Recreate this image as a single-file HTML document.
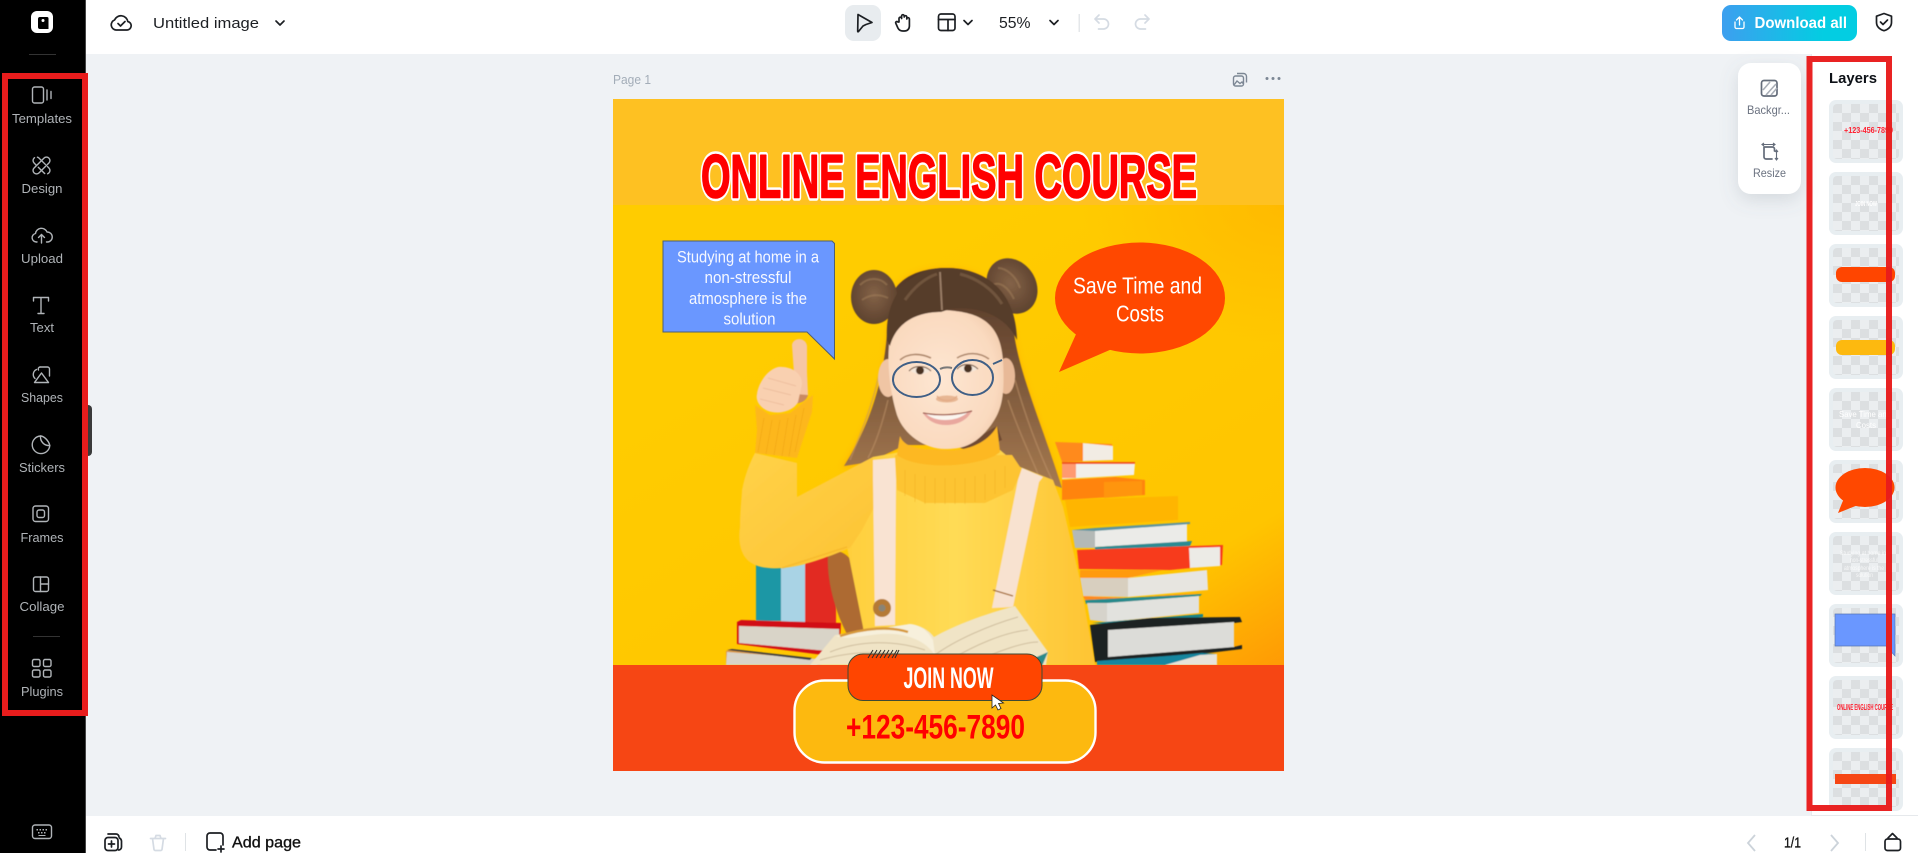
<!DOCTYPE html>
<html lang="en"><head><meta charset="utf-8"><title>Untitled image</title>
<style>
html,body{margin:0;padding:0;width:1918px;height:853px;overflow:hidden;background:#eff2f5}
svg{display:block;position:absolute;left:0;top:0}
text{font-family:"Liberation Sans",sans-serif}
.n{font-family:"Liberation Sans Narrow","Liberation Sans",sans-serif}
.ic{fill:none;stroke:#b0b4b8;stroke-width:1.4;stroke-linecap:round;stroke-linejoin:round}
.d{fill:none;stroke:#1c1f23;stroke-width:1.7;stroke-linecap:round;stroke-linejoin:round}
.g{fill:none;stroke:#d5dbe3;stroke-width:1.7;stroke-linecap:round;stroke-linejoin:round}
.s{fill:none;stroke:#646c7a;stroke-width:1.7;stroke-linecap:round;stroke-linejoin:round}
.lb{fill:#b0b4b8;font-size:13px;text-anchor:middle}
</style></head><body>
<svg width="1918" height="853" viewBox="0 0 1918 853" xmlns="http://www.w3.org/2000/svg">
<defs>
<clipPath id="pc"><rect x="613" y="99" width="671" height="672"/></clipPath>
<clipPath id="ph"><rect x="613" y="205" width="671" height="460"/></clipPath>
<pattern id="chk" x="1833" y="104" width="18" height="18" patternUnits="userSpaceOnUse"><rect width="18" height="18" fill="#ebeef0"/><rect width="9" height="9" fill="#dcdfe1"/><rect x="9" y="9" width="9" height="9" fill="#dcdfe1"/></pattern>
<linearGradient id="bg" x1="0.3" y1="0.2" x2="1" y2="1"><stop offset="0" stop-color="#ffcc00"/><stop offset=".76" stop-color="#ffc500"/><stop offset="1" stop-color="#ff9a05"/></linearGradient>
<radialGradient id="bg2" cx="1" cy="0" r=".3"><stop offset="0" stop-color="#ffb000" stop-opacity=".6"/><stop offset="1" stop-color="#ffb000" stop-opacity="0"/></radialGradient>
<linearGradient id="hair" x1="0" y1="0" x2="0" y2="1"><stop offset="0" stop-color="#4f3626"/><stop offset=".3" stop-color="#6b4a33"/><stop offset="1" stop-color="#a67a50"/></linearGradient>
<linearGradient id="sw" x1="0" y1="0" x2="1" y2="0"><stop offset="0" stop-color="#ffce3c"/><stop offset=".45" stop-color="#ffdb55"/><stop offset="1" stop-color="#fec433"/></linearGradient>
<linearGradient id="slv" x1="0" y1="0" x2="1" y2="1"><stop offset="0" stop-color="#ffd248"/><stop offset="1" stop-color="#fdc334"/></linearGradient>
<radialGradient id="face" cx=".45" cy=".5" r=".65"><stop offset="0" stop-color="#fee6d2"/><stop offset=".75" stop-color="#fadabf"/><stop offset="1" stop-color="#f1c9a9"/></radialGradient>
<radialGradient id="bun" cx=".5" cy=".45" r=".6"><stop offset="0" stop-color="#846348"/><stop offset="1" stop-color="#5a3f2c"/></radialGradient>
<linearGradient id="dl" x1="0" y1="0" x2="1" y2="0"><stop offset="0" stop-color="#3d9fef"/><stop offset=".75" stop-color="#03cde2"/></linearGradient>
<filter id="b05"><feGaussianBlur stdDeviation=".5"/></filter>
<filter id="b3"><feGaussianBlur stdDeviation="3"/></filter>
<filter id="sh" x="-40%" y="-40%" width="180%" height="180%"><feDropShadow dx="0" dy="6" stdDeviation="9" flood-color="#6b7480" flood-opacity=".2"/></filter>
</defs>

<!-- chrome -->
<rect x="86" y="0" width="1832" height="54" fill="#fff"/>
<rect x="86" y="816" width="1832" height="37" fill="#fff"/>
<rect x="1811" y="54" width="107" height="762" fill="#fff"/>
<rect x="1811" y="54" width="1" height="762" fill="#e8ebee"/>
<rect x="1811" y="815" width="107" height="1" fill="#e6e9ec"/>

<!-- poster -->
<g clip-path="url(#pc)">
<rect x="613" y="99" width="671" height="106" fill="#fec122"/>
<rect x="613" y="205" width="671" height="460" fill="url(#bg)"/>
<rect x="613" y="205" width="671" height="460" fill="url(#bg2)"/>
<g clip-path="url(#ph)">
<!-- right books -->
<g filter="url(#b05)">
<path d="M1065 500L1178 496V520L1070 527Z" fill="#ffb500"/>
<path d="M1055 442L1112 444L1113 460L1062 462Z" fill="#ff8a1e"/><path d="M1083 443L1113 446V460L1083 461Z" fill="#f2ece4"/>
<path d="M1062 463L1135 463L1134 475L1062 479Z" fill="#f2efe9"/><path d="M1062 464H1076V478H1062Z" fill="#ff9a70"/><path d="M1062 462H1135V464H1062Z" fill="#f0561e"/>
<path d="M1062 480L1115 477L1145 480V495L1062 500Z" fill="#ff8410"/><path d="M1104 482L1142 481V495L1104 498Z" fill="#ff9510"/>
<path d="M1072 530L1095 530V548L1075 548Z" fill="#b4b9b6"/><path d="M1095 530L1187 523V542L1095 547Z" fill="#ebebe8"/><path d="M1095 547L1192 541L1190 546L1095 551Z" fill="#2a8b93"/><path d="M1095 528L1190 522V524L1095 531L1072 530Z" fill="#5d94a0"/>
<path d="M1077 550L1223 545L1222 565L1170 570L1079 569Z" fill="#f73b1e"/><path d="M1189 548L1220 547V566L1190 568Z" fill="#ecebe6"/>
<path d="M1080 570L1163 570L1128 578H1080Z" fill="#ff9a10"/>
<path d="M1080 578H1128V597L1083 596Z" fill="#d8cfbf"/><path d="M1128 578L1207 570L1208 590L1128 597Z" fill="#e7e5e0"/><path d="M1083 596L1128 598L1202 593L1128 600L1085 600Z" fill="#ff8a1a"/>
<path d="M1085 600L1202 594L1200 596L1108 604H1086Z" fill="#258a8c"/>
<path d="M1087 603H1107V622L1090 620Z" fill="#d6d3cb"/><path d="M1107 603L1199 596V613L1107 622Z" fill="#e2e2de"/>
<path d="M1092 623L1203 614V617L1123 625Z" fill="#18838b"/>
<path d="M1090 625L1150 618L1240 617L1242 622L1234 623V647L1242 645V649L1150 660L1095 662Z" fill="#1f2222"/>
<path d="M1108 630L1234 622V647L1108 657Z" fill="#dcdcd8"/>
<path d="M1097 661L1167 656L1202 653L1217 654V665H1097Z" fill="#15869e"/><path d="M1165 665L1200 655L1217 654V665Z" fill="#e7e3da"/>
</g>
<!-- left books -->
<g filter="url(#b05)">
<rect x="756" y="560" width="25" height="61" fill="#1a97a5"/>
<rect x="781" y="560" width="24" height="62" fill="#a9d3e5"/>
<rect x="805" y="555" width="31" height="69" fill="#e22a20"/>
<path d="M737 622L741 620L841 623L839 657L737 644Z" fill="#d10f19"/>
<path d="M739 626L839 629V652L739 643Z" fill="#d9d4c8"/>
<path d="M726 651L731 649L821 660V665H726Z" fill="#db9a45"/><path d="M727 652L817 659V665H726Z" fill="#d8d4c9"/><path d="M727 650L732 649L812 658L810 660Z" fill="#3a3b40"/>
</g>
<!-- glow + back hair -->
<path d="M888 320C885 285 910 268 947 268C985 268 1010 290 1015 340C1022 380 1042 425 1062 488L1040 480L985 445L905 445L870 462L842 468C870 425 885 380 888 320Z" fill="#ff9d00" opacity=".5" filter="url(#b3)"/>
<g filter="url(#b05)">
<path d="M888 320C885 285 910 268 947 268C985 268 1010 290 1015 340C1022 380 1042 425 1062 488L1040 480L985 445L905 445L870 462L844 466C870 425 885 380 888 320Z" fill="url(#hair)"/>
<path d="M880 370C873 405 860 435 850 460M888 400C882 425 875 445 868 458M1015 380C1025 415 1038 450 1052 480M1008 400C1018 430 1028 450 1038 474" fill="none" stroke="#c0946a" stroke-width="1.6" opacity=".5"/>
<path d="M828 552C846 546 858 565 864 590L867 634L848 636C835 612 826 580 828 552Z" fill="#ad6a33"/>
<!-- buns -->
<ellipse cx="874" cy="297" rx="23" ry="27" fill="url(#bun)"/>
<ellipse cx="1012" cy="286" rx="24" ry="29" transform="rotate(-32 1012 286)" fill="url(#bun)"/>
<path d="M860 285c8-8 20-8 27 0M862 300c8-6 18-6 26-2M998 268c8 0 18 8 22 20M992 285c8-4 16 2 22 14" fill="none" stroke="#a98560" stroke-width="2" opacity=".45"/>
<!-- torso -->
<path d="M873 457L900 452L1000 450L1020 467L1053 480L1063 507L1080 580L1095 665H868L863 627L847 547L840 500Z" fill="url(#sw)"/>
<!-- arm -->
<path d="M755 453L797 463L797 497L873 457L878 500L862 530L850 548C825 558 805 566 783 568C770 569 758 568 750 562C740 555 738 540 740 527C740 510 742 495 742 490C745 475 750 462 755 453Z" fill="url(#slv)"/>
<path d="M782 568L847 547" fill="none" stroke="#eea71c" stroke-width="1.500" opacity=".4"/>
<!-- cuff -->
<path d="M755 405L770 415L790 413L813 395L812 412L797 458L755 453L757 430Z" fill="#fdb71f"/>
<path d="M764 418l-6 34M772 420l-6 34M780 420l-6 35M788 418l-6 38M796 415l-7 41M804 408l-9 44" stroke="#ec9f10" stroke-width="1" opacity=".45" fill="none"/>
<!-- hand -->
<path d="M792 345C793 337 806 337 807 346L807 372L808 395L796 402Z" fill="#f6c6a4"/>
<path d="M796 394L808 395C806 402 800 403 794 404Z" fill="#c98a62"/>
<path d="M778 367C790 366 802 372 802 384L798 402C794 410 782 414 772 412C762 410 755 402 757 394C758 385 766 370 778 367Z" fill="#f9d0b0"/>
<path d="M768 378l28 8M763 388l28 7M760 399l24 6" stroke="#e9b898" stroke-width="1" opacity=".7" fill="none"/>
<!-- neck shadow -->
<path d="M960 448L997 426L1002 440L975 452Z" fill="#6f4a33"/>
<!-- collar -->
<path d="M895 455L1012 455L1022 470L1013 490L985 503H925L897 490Z" fill="#fdc433"/>
<path d="M900 436C905 450 925 449 945 450C970 452 990 440 997 426L1000 452C985 466 920 472 897 455Z" fill="#fdb822"/>
<path d="M905 470v26M915 474v28M925 476v28M935 478v26M945 478v26M955 478v26M965 478v26M975 476v26M985 474v26M995 470v24M1005 466v22" stroke="#f2ad22" stroke-width=".9" opacity=".5" fill="none"/>
<!-- straps -->
<path d="M873 460L895 458L896 480L895 625L875 626L873 480Z" fill="#f9e3d2"/>
<path d="M1022 468L1043 477L1039 482L1013 607L992 608L1018 480Z" fill="#f8e2d0"/>
<path d="M993 590l20 6" stroke="#a66a2b" stroke-width="1.300"/>
<circle cx="882" cy="608" r="9" fill="#b57a36"/><circle cx="882" cy="608" r="3.500" fill="#8a8474"/>
<!-- ears + face -->
<ellipse cx="888" cy="378" rx="10" ry="19" fill="#f0c5a4"/>
<ellipse cx="1006" cy="376" rx="9" ry="18" fill="#e8b997"/>
<path d="M889 345C893 312 925 310 944 310C977 312 1000 320 1003 360C1005 395 1002 410 991 425C975 447 960 449 945 449C925 449 904 435 897 415C891 395 887 370 889 345Z" fill="url(#face)"/>
<!-- hair top -->
<path d="M887 340C884 290 915 268 945 268C985 268 1016 290 1017 340C1008 320 985 305 950 309L941 312C920 312 897 320 890 346Z" fill="#573c2a"/>
<path d="M940 272l2 38" stroke="#b89c82" stroke-width="1.800" opacity=".7"/>
<path d="M905 300c10-14 20-22 32-26M960 274c16 4 32 14 42 30" fill="none" stroke="#8a6b50" stroke-width="3" opacity=".5"/>
<!-- brows, eyes -->
<path d="M900 360c8-7 20-7 31-2M957 358c10-6 22-6 32 1" fill="none" stroke="#ab8468" stroke-width="1.600"/>
<path d="M911 371c4-5 14-5 19 0c-5 4-14 4-19 0z" fill="#f4e7da"/><path d="M959 369c4-5 13-5 18 0c-5 4-13 4-18 0z" fill="#f4e7da"/>
<circle cx="920" cy="370.500" r="4" fill="#4a3020"/><circle cx="968" cy="368.500" r="4" fill="#4a3020"/>
<path d="M909 371c5-6 16-6 22 0M957 369c5-6 15-6 21 0" fill="none" stroke="#5f4332" stroke-width="1"/>
</g>
<!-- glasses -->
<ellipse cx="916.500" cy="379.500" rx="23.500" ry="17.500" fill="none" stroke="#3f5f86" stroke-width="2"/>
<ellipse cx="972.500" cy="377.500" rx="20.500" ry="17.500" fill="none" stroke="#3f5f86" stroke-width="2"/>
<path d="M940 369c4-2 8-2 12-1" fill="none" stroke="#7a7a7a" stroke-width="2"/>
<path d="M993 364l9-4" stroke="#3f5f83" stroke-width="1.800"/>
<!-- nose, mouth -->
<g filter="url(#b05)">
<ellipse cx="947" cy="399" rx="11" ry="3.500" fill="#e7b693"/>
<path d="M937 396c4 6 16 6 20 0" fill="none" stroke="#e2aa86" stroke-width="1.200"/>
<path d="M923 413C938 417 958 416 972 411C966 422 955 425 946 425C936 425 928 421 923 413Z" fill="#e9a79e"/>
<path d="M926 414C940 417 956 416 968 412C962 418 953 420 945 420C937 420 931 418 926 414Z" fill="#fbf6f0"/>
<path d="M923 413C938 416 958 415 972 411" fill="none" stroke="#8a4a3e" stroke-width="1"/>
</g>
<!-- open book -->
<g filter="url(#b05)">
<path d="M810 665L835 635L910 624C920 625 929 630 934 637C955 625 985 614 1015 606L1048 652L1046 665Z" fill="#f0e4c6"/>
<path d="M836 636L910 624C920 625 927 630 933 640L935 655C925 640 905 632 880 634C860 636 845 640 836 636Z" fill="#f7f0dc"/>
<path d="M840 636C865 628 890 626 908 632" fill="none" stroke="#d79a3a" stroke-width="2.500"/>
<path d="M935 655C955 640 990 625 1018 617M950 660C975 645 1005 632 1028 630M975 662C1000 650 1025 642 1038 642M830 652C860 640 895 640 925 650M820 660C855 650 895 650 918 660" fill="none" stroke="#cfbe9e" stroke-width="1"/>
<path d="M1030 660l18-8-6 14z" fill="#2b8a8a"/>
</g>
</g>
<!-- bottom -->
<rect x="613" y="665" width="671" height="106" fill="#f64614"/>
<rect x="794.500" y="680.500" width="301" height="82" rx="30" fill="#fdb90f" stroke="#fff" stroke-width="2.400"/>
<rect x="848" y="654" width="194" height="46.500" rx="15" fill="#ff4500" stroke="#3e4a35" stroke-width="1"/>
<path d="M868 658l5-8M872 658l5-8M876 658l5-8M880 658l5-8M884 658l5-8M888 658l5-8M892 658l5-8M895 658l4-8" stroke="#2c2c2c" stroke-width="1"/>
<text class="n" x="903.500" y="688" textLength="90" lengthAdjust="spacingAndGlyphs" font-size="30" font-weight="700" fill="#fff">JOIN NOW</text>
<text class="n" x="846" y="738.500" textLength="179" lengthAdjust="spacingAndGlyphs" font-size="34.500" font-weight="700" fill="#ff0000">+123-456-7890</text>
<path d="M992 695l0 13 3.500-3 2.500 5 3-1.500-2.500-5 5-.5z" fill="#fff" stroke="#222" stroke-width=".8"/>
<!-- title -->
<text class="n" x="701" y="197.500" textLength="496" lengthAdjust="spacingAndGlyphs" font-size="61" font-weight="700" fill="#ff0000" stroke="#fff" stroke-width="6.500" stroke-linejoin="round">ONLINE ENGLISH COURSE</text>
<text class="n" x="701" y="197.500" textLength="496" lengthAdjust="spacingAndGlyphs" font-size="61" font-weight="700" fill="#ff0000" stroke="#ff0000" stroke-width="1.600" stroke-linejoin="round">ONLINE ENGLISH COURSE</text>
<!-- callout -->
<path d="M663 241H832l2.500 2.500V359L807 332H663Z" fill="#6a97ff" stroke="#4f5f70" stroke-width="1"/>
<text class="n" x="677" y="262.500" textLength="142" lengthAdjust="spacingAndGlyphs" fill="#f6f8ff" font-size="17">Studying at home in a</text>
<text class="n" x="704.500" y="283" textLength="87" lengthAdjust="spacingAndGlyphs" fill="#f6f8ff" font-size="17">non-stressful</text>
<text class="n" x="689" y="304" textLength="118" lengthAdjust="spacingAndGlyphs" fill="#f6f8ff" font-size="17">atmosphere is the</text>
<text class="n" x="723.500" y="324.500" textLength="52" lengthAdjust="spacingAndGlyphs" fill="#f6f8ff" font-size="17">solution</text>
<!-- bubble -->
<ellipse cx="1140" cy="298" rx="85" ry="55.500" fill="#ff4800"/>
<path d="M1077 332L1059 372L1112 349Z" fill="#ff4800"/>
<text class="n" x="1073" y="293.500" textLength="129" lengthAdjust="spacingAndGlyphs" font-size="23" fill="#fff">Save Time and</text>
<text class="n" x="1116" y="321.500" textLength="48" lengthAdjust="spacingAndGlyphs" font-size="23" fill="#fff">Costs</text>
</g>

<!-- page label -->
<text x="613" y="84" textLength="38" lengthAdjust="spacingAndGlyphs" font-size="13" fill="#a3adb8">Page 1</text>
<g fill="none" stroke="#7c8794" stroke-width="1.400"><rect x="1233.500" y="76" width="10" height="10" rx="2"/><path d="M1237 73.500h6.500a3 3 0 0 1 3 3v6"/><path d="M1234 85l3-4 3 2.500 2-1.500 1.500 2"/></g>
<g fill="#7c8794"><circle cx="1267" cy="78.500" r="1.500"/><circle cx="1273" cy="78.500" r="1.500"/><circle cx="1279" cy="78.500" r="1.500"/></g>

<!-- side mini-card -->
<rect x="1738" y="63" width="63" height="131" rx="13" fill="#fff" filter="url(#sh)"/>
<rect x="1761.500" y="80.500" width="15.500" height="15.500" rx="2.500" class="s"/>
<path d="M1763 90l7-8M1766 95l10-11M1771 95l6-7" stroke="#a9aeb7" stroke-width="1.600" fill="none"/>
<text x="1747" y="114" textLength="43" lengthAdjust="spacingAndGlyphs" font-size="12" fill="#6b7280">Backgr...</text>
<path d="M1764 147h8.500a2 2 0 0 1 2 2v2M1764 147v10a2 2 0 0 0 2 2h6" class="s"/>
<path d="M1762 144.500h13M1764 143l-2 1.500 2 1.500M1773 143l2 1.500-2 1.500M1776.500 150v10M1775 152l1.500-2 1.500 2M1775 158l1.500 2 1.500-2" fill="none" stroke="#646c7a" stroke-width="1.100"/>
<text x="1753" y="177" textLength="33" lengthAdjust="spacingAndGlyphs" font-size="12" fill="#6b7280">Resize</text>

<!-- layers -->
<text x="1829" y="83" textLength="48" lengthAdjust="spacingAndGlyphs" font-size="15" font-weight="700" fill="#0d1117">Layers</text>
<g fill="#e8eef1"><rect x="1829" y="100" width="74" height="63" rx="7"/><rect x="1829" y="172" width="74" height="63" rx="7"/><rect x="1829" y="244" width="74" height="63" rx="7"/><rect x="1829" y="316" width="74" height="63" rx="7"/><rect x="1829" y="388" width="74" height="63" rx="7"/><rect x="1829" y="460" width="74" height="63" rx="7"/><rect x="1829" y="532" width="74" height="63" rx="7"/><rect x="1829" y="604" width="74" height="63" rx="7"/><rect x="1829" y="676" width="74" height="63" rx="7"/><rect x="1829" y="748" width="74" height="63" rx="7"/></g>
<g fill="url(#chk)"><rect x="1833" y="104" width="66" height="55" rx="4"/><rect x="1833" y="176" width="66" height="55" rx="4"/><rect x="1833" y="248" width="66" height="55" rx="4"/><rect x="1833" y="320" width="66" height="55" rx="4"/><rect x="1833" y="392" width="66" height="55" rx="4"/><rect x="1833" y="464" width="66" height="55" rx="4"/><rect x="1833" y="536" width="66" height="55" rx="4"/><rect x="1833" y="608" width="66" height="55" rx="4"/><rect x="1833" y="680" width="66" height="55" rx="4"/><rect x="1833" y="752" width="66" height="55" rx="4"/></g>
<text class="n" x="1844" y="133" textLength="49" lengthAdjust="spacingAndGlyphs" font-size="8.500" font-weight="700" fill="#ff2030">+123-456-7890</text>
<text class="n" x="1855" y="206" textLength="22" lengthAdjust="spacingAndGlyphs" font-size="7.500" font-weight="700" fill="#fff">JOIN NOW</text>
<rect x="1836" y="267" width="59" height="15" rx="6" fill="#ff4500"/>
<rect x="1836" y="340" width="59" height="15" rx="6" fill="#fdb90f"/>
<text class="n" x="1839" y="417" textLength="52" lengthAdjust="spacingAndGlyphs" font-size="8.500" fill="#fff">Save Time and</text>
<text class="n" x="1856" y="428" textLength="20" lengthAdjust="spacingAndGlyphs" font-size="8.500" fill="#fff">Costs</text>
<ellipse cx="1865" cy="487.500" rx="29.500" ry="19.500" fill="#ff4800"/><path d="M1844 498L1838 513L1858 505Z" fill="#ff4800"/>
<g fill="#fff" opacity=".75" font-size="6.500"><text class="n" x="1840" y="555" textLength="46" lengthAdjust="spacingAndGlyphs">Studying at home in</text><text class="n" x="1850" y="562" textLength="28" lengthAdjust="spacingAndGlyphs">non-stressful</text><text class="n" x="1844" y="570" textLength="40" lengthAdjust="spacingAndGlyphs">atmosphere is the</text><text class="n" x="1856" y="577" textLength="17" lengthAdjust="spacingAndGlyphs">solution</text></g>
<path d="M1835 614H1895V656L1886 646H1835Z" fill="#6a97ff" stroke="#5877b5" stroke-width=".7"/>
<text class="n" x="1837" y="710" textLength="56" lengthAdjust="spacingAndGlyphs" font-size="8" font-weight="700" fill="#ff2030">ONLINE ENGLISH COURSE</text>
<rect x="1835" y="774" width="61" height="10" fill="#f64614"/>
<!-- right red box -->
<rect x="1809.500" y="59" width="79.500" height="749" fill="none" stroke="#e81c1c" stroke-width="6" opacity=".97"/>

<!-- sidebar -->
<rect x="0" y="0" width="86" height="853" fill="#000"/>
<rect x="85" y="0" width="1" height="853" fill="#444"/>
<path d="M86 405h2a4 4 0 0 1 4 4v43a4 4 0 0 1-4 4h-2z" fill="#3a3a3a"/>
<rect x="31" y="11" width="22" height="22" rx="6" fill="#fff"/>
<path d="M40 17h7a1.500 1.500 0 0 1 1.500 1.500V29H40a2 2 0 0 1-2-2v-8a2 2 0 0 1 2-2z" fill="#000"/><circle cx="43" cy="20.500" r="1.500" fill="#fff"/>
<rect x="29" y="54" width="27" height="1" fill="#333"/>

<rect x="32.500" y="87" width="11" height="16" rx="2" class="ic"/><path d="M47 90v10M51 91.500v7" class="ic"/>
<text class="lb" x="42" y="123" textLength="60" lengthAdjust="spacingAndGlyphs">Templates</text>

<g class="ic"><rect x="31" y="162" width="21" height="7" rx="3.500" transform="rotate(-45 41.500 165.500)"/><rect x="31" y="162" width="21" height="7" rx="3.500" transform="rotate(45 41.500 165.500)" stroke-dasharray="9 3"/></g>
<text class="lb" x="42" y="193" textLength="41" lengthAdjust="spacingAndGlyphs">Design</text>

<g class="ic"><path d="M37 242h-.5a4.300 4.300 0 0 1-1-8.500 6 6 0 0 1 11.500-1.500 5 5 0 0 1 .5 10h-1"/><path d="M41.500 243v-8.500M38.500 237.500l3-3 3 3"/></g>
<text class="lb" x="42" y="263" textLength="42" lengthAdjust="spacingAndGlyphs">Upload</text>

<g class="ic"><path d="M33.500 301v-3.500h15v3.500M41 297.500v16M38 313.500h6"/></g>
<text class="lb" x="42" y="332" textLength="24" lengthAdjust="spacingAndGlyphs">Text</text>

<g class="ic"><path d="M40 367h7.500a2 2 0 0 1 2 2v7M36.500 369.500a5.500 5.500 0 0 0-1.500 9"/><path d="M41.500 373l7 9.500h-14z"/><path d="M40 367a2 2 0 0 0-1.500 3"/></g>
<text class="lb" x="42" y="402" textLength="42" lengthAdjust="spacingAndGlyphs">Shapes</text>

<g class="ic"><path d="M40.500 436a8.800 8.800 0 1 0 9.300 9.500"/><path d="M40.500 436c3 0 8 4 9.300 9.500-5 .5-9.800-3.500-9.300-9.500z"/></g>
<text class="lb" x="42" y="472" textLength="46" lengthAdjust="spacingAndGlyphs">Stickers</text>

<rect x="33" y="506" width="15.500" height="15.500" rx="2.500" class="ic" stroke-width="1.600"/><rect x="37" y="510" width="7.500" height="7.500" rx="2" class="ic"/>
<text class="lb" x="42" y="542" textLength="43" lengthAdjust="spacingAndGlyphs">Frames</text>

<g class="ic"><rect x="33.500" y="577" width="15" height="14.500" rx="2"/><path d="M40.500 577v14.500M40.500 584h8"/></g>
<text class="lb" x="42" y="611" textLength="45" lengthAdjust="spacingAndGlyphs">Collage</text>

<rect x="33" y="636" width="27" height="1" fill="#333"/>
<g class="ic"><rect x="32.500" y="659.500" width="7.500" height="7" rx="1.500"/><rect x="43.500" y="659.500" width="7.500" height="7" rx="1.500"/><rect x="32.500" y="670" width="7.500" height="7" rx="1.500"/><rect x="43.500" y="670" width="7.500" height="7" rx="1.500"/></g>
<text class="lb" x="42" y="696" textLength="42" lengthAdjust="spacingAndGlyphs">Plugins</text>

<rect x="32.500" y="825" width="19" height="13.500" rx="2.500" class="ic" stroke="#9a9ea2"/>
<g fill="#b0b4b8"><rect x="36.500" y="829" width="1.500" height="1.500"/><rect x="39.500" y="829" width="1.500" height="1.500"/><rect x="42.500" y="829" width="1.500" height="1.500"/><rect x="45.500" y="829" width="1.500" height="1.500"/><rect x="38" y="832" width="1.500" height="1.500"/><rect x="41" y="832" width="1.500" height="1.500"/><rect x="44" y="832" width="1.500" height="1.500"/><rect x="38.500" y="835" width="7" height="1"/></g>

<!-- left red box -->
<rect x="5" y="76" width="80" height="637" fill="none" stroke="#e81c1c" stroke-width="6"/>

<!-- header -->
<path d="M116 30h11a4.300 4.300 0 0 0 .8-8.500A7 7 0 0 0 114.500 20 5.200 5.200 0 0 0 116 30z" class="d"/><path d="M118 23.500l2.500 2.500 4.500-4.500" class="d" stroke-width="1.400"/>
<text x="153" y="28" textLength="106" lengthAdjust="spacingAndGlyphs" font-size="15" fill="#1c1f23">Untitled image</text>
<path d="M276 21l4 4 4-4" class="d"/>
<rect x="845" y="5" width="36" height="36" rx="9" fill="#e8ecef"/>
<path d="M858 14.500l14 8-6 2-3 1.500-4.500 5.500c-.5.500-.8.300-.8-.3z" class="d"/>
<path d="M899 22v-3.500a1.300 1.300 0 0 1 2.600 0V16a1.300 1.300 0 0 1 2.600 0v1a1.300 1.300 0 0 1 2.600 0v2a1.300 1.300 0 0 1 2.600 0v7c0 3-2 5-5 5h-1.500c-2.500 0-4-1-5-3l-2-4.500c-.8-1.500 1-2.700 2-1.500z" class="d"/>
<rect x="938.500" y="14" width="16.500" height="16.500" rx="2.500" class="d"/><path d="M938.500 19.500h16.500M948 19.500v11" class="d"/>
<path d="M964 20.500l4 4 4-4" class="d"/>
<text x="999" y="28" textLength="31.500" lengthAdjust="spacingAndGlyphs" font-size="15.500" fill="#1c1f23">55%</text>
<path d="M1050 20.500l4 4 4-4" class="d"/>
<rect x="1078.500" y="14" width="1.500" height="18" fill="#e4e7ea"/>
<path d="M1099 15l-4 4 4 4M1095 19h8.500a5 5 0 0 1 0 10h-5" class="g"/>
<path d="M1145 15l4 4-4 4M1149 19h-8.500a5 5 0 0 0 0 10h5" class="g"/>

<rect x="1722" y="5" width="135" height="36" rx="9" fill="url(#dl)"/>
<path d="M1739.500 25v-7.500M1736.500 20l3-3 3 3M1735 22v5a1.500 1.500 0 0 0 1.500 1.500h6a1.500 1.500 0 0 0 1.500-1.500v-5" fill="none" stroke="#fff" stroke-width="1.300" stroke-linecap="round" stroke-linejoin="round"/>
<text x="1754.500" y="28" textLength="92.500" lengthAdjust="spacingAndGlyphs" font-size="15.500" font-weight="700" fill="#fff">Download all</text>
<path d="M1884 13.500l7.500 2.700v6c0 4-3 7-7.500 8.500-4.500-1.500-7.500-4.500-7.500-8.500v-6z" class="d" stroke-width="1.800"/><path d="M1880.500 22l2.500 2.500 4.500-4.500" class="d"/>

<!-- bottom -->
<path d="M108 834h8a3 3 0 0 1 3 3M119.500 838a4 4 0 0 1 2 3v6a3 3 0 0 1-3 3" class="d"/><rect x="105" y="837.500" width="13" height="13" rx="3" class="d"/><path d="M111.500 841v6M108.500 844h6" class="d" stroke-width="1.500"/>
<path d="M150.500 838.500h15M155 838.500l1-3h4l1 3M152.500 838.500l1.500 11a1.500 1.500 0 0 0 1.500 1h5a1.500 1.500 0 0 0 1.500-1l1.500-11" class="g"/>
<rect x="185" y="833" width="1" height="18" fill="#dfe3e6"/>
<path d="M216 850h-6a3 3 0 0 1-3-3v-11a3 3 0 0 1 3-3h10a3 3 0 0 1 3 3v9M221 846v6M218 849h6" class="d" stroke="#111" stroke-width="1.800"/>
<text x="232" y="847.500" textLength="69" lengthAdjust="spacingAndGlyphs" font-size="15.500" fill="#111" stroke="#111" stroke-width=".35">Add page</text>
<path d="M1755 835l-7 8 7 8" fill="none" stroke="#ccd3da" stroke-width="1.800"/>
<text x="1784" y="847.500" textLength="17" lengthAdjust="spacingAndGlyphs" font-size="15" fill="#111" stroke="#111" stroke-width=".3">1/1</text>
<path d="M1831 835l7 8-7 8" fill="none" stroke="#ccd3da" stroke-width="1.800"/>
<rect x="1865" y="833" width="1" height="18" fill="#dfe3e6"/>
<rect x="1885" y="839" width="15.500" height="11.500" rx="2.500" class="d" stroke="#111" stroke-width="1.800"/><path d="M1888 838l4.500-4.500 4.500 4.500" class="d" stroke="#111"/>
</svg>
</body></html>
